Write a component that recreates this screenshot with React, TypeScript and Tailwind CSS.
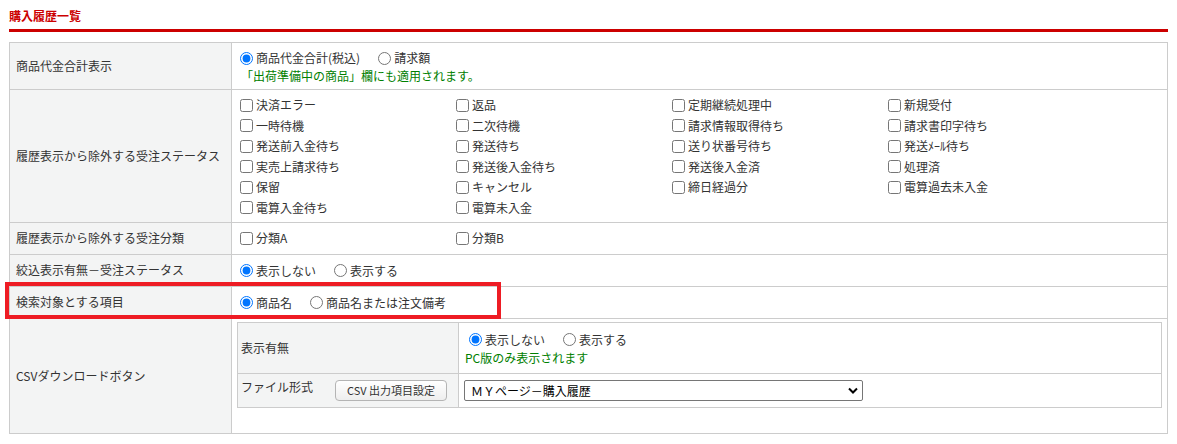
import React from "react";

const FONT = "font-['Noto_Sans_CJK_JP','Noto_Sans',sans-serif]";

const statuses: string[] = [
  "決済エラー", "返品", "定期継続処理中", "新規受付",
  "一時待機", "二次待機", "請求情報取得待ち", "請求書印字待ち",
  "発送前入金待ち", "発送待ち", "送り状番号待ち", "発送ﾒｰﾙ待ち",
  "実売上請求待ち", "発送後入金待ち", "発送後入金済", "処理済",
  "保留", "キャンセル", "締日経過分", "電算過去未入金",
  "電算入金待ち", "電算未入金",
];

const Check: React.FC<{ label: string }> = ({ label }) => (
  <label className="flex items-center h-[20.5px] whitespace-nowrap">
    <input type="checkbox" className="m-0 mr-[3px] size-[13px]" />
    <span>{label}</span>
  </label>
);

const Radio: React.FC<{ name: string; label: string; checked?: boolean }> = ({ name, label, checked }) => (
  <label className="inline-flex items-center h-[20px] mr-[18px] whitespace-nowrap">
    <input type="radio" name={name} defaultChecked={checked} className="m-0 mr-[3px] size-[13px]" />
    <span>{label}</span>
  </label>
);

const Th: React.FC<{ children: React.ReactNode }> = ({ children }) => (
  <td className="w-[222px] border border-[#cccccc] bg-[#f3f4f4] pl-[6px] align-middle">{children}</td>
);

export default function App() {
  return (
    <div className={`relative bg-white px-[9px] pt-[9px] text-[12px] leading-[16px] text-[#333333] ${FONT}`}>
      <h2 className="text-[12px] leading-[14px] font-bold text-[#cc0000] pb-[6px] border-b-[3px] border-[#cc0000]">
        購入履歴一覧
      </h2>

      <table className="mt-[10px] w-full border-collapse">
        <tbody>
          <tr>
            <Th>商品代金合計表示</Th>
            <td className="border border-[#cccccc] pl-[8px] pt-[5px] pb-[5px]">
              <div className="flex">
                <Radio name="total" label="商品代金合計(税込)" checked />
                <Radio name="total" label="請求額" />
              </div>
              <div className="text-[#008000] pl-[1px]">「出荷準備中の商品」欄にも適用されます。</div>
            </td>
          </tr>
          <tr>
            <Th>履歴表示から除外する受注ステータス</Th>
            <td className="border border-[#cccccc] pl-[8px] pt-[5px] pb-[4px]">
              <div className="grid grid-cols-[216px_216px_216px_216px]">
                {statuses.map((s) => (
                  <Check key={s} label={s} />
                ))}
              </div>
            </td>
          </tr>
          <tr>
            <Th>履歴表示から除外する受注分類</Th>
            <td className="border border-[#cccccc] pl-[8px] pt-[5px] pb-[5px]">
              <div className="grid grid-cols-[216px_216px_216px_216px]">
                <Check label="分類A" />
                <Check label="分類B" />
              </div>
            </td>
          </tr>
          <tr>
            <Th>絞込表示有無－受注ステータス</Th>
            <td className="border border-[#cccccc] pl-[8px] pt-[6px] pb-[5px]">
              <div className="flex">
                <Radio name="filter" label="表示しない" checked />
                <Radio name="filter" label="表示する" />
              </div>
            </td>
          </tr>
          <tr>
            <Th>検索対象とする項目</Th>
            <td className="border border-[#cccccc] pl-[8px] pt-[6px] pb-[5px]">
              <div className="flex">
                <Radio name="target" label="商品名" checked />
                <Radio name="target" label="商品名または注文備考" />
              </div>
            </td>
          </tr>
          <tr>
            <Th>CSVダウンロードボタン</Th>
            <td className="border border-[#cccccc] px-[5px] pt-[3px] pb-[25px]">
              <table className="w-full border-collapse">
                <tbody>
                  <tr>
                    <td className="w-[221px] h-[51px] border border-[#cccccc] bg-[#f3f4f4] pl-[3px] align-middle">
                      表示有無
                    </td>
                    <td className="border border-[#cccccc] pl-[6px] py-[6px]">
                      <div className="flex pl-[4px]">
                        <Radio name="csv" label="表示しない" checked />
                        <Radio name="csv" label="表示する" />
                      </div>
                      <div className="text-[#008000]">PC版のみ表示されます</div>
                    </td>
                  </tr>
                  <tr>
                    <td className="w-[221px] h-[34px] border border-[#cccccc] bg-[#f3f4f4] pl-[3px] align-middle">
                      <div className="flex items-center">
                        <span className="-mt-[6px]">ファイル形式</span>
                        <button
                          type="button"
                          className="ml-[22px] h-[21px] w-[112px] rounded-[4px] border border-[#b4b4b4] bg-gradient-to-b from-white to-[#eeeeee] text-[11px] leading-[19px] text-[#333333]"
                        >
                          CSV 出力項目設定
                        </button>
                      </div>
                    </td>
                    <td className="border border-[#cccccc] pl-[5px]">
                      <div className="relative w-[399px]">
                        <select className="block h-[21px] w-full appearance-none rounded-[2px] border border-[#767676] bg-white pl-[6px] text-[12px] leading-[19px] text-black">
                          <option>ＭＹページ－購入履歴</option>
                        </select>
                        <svg
                          className="pointer-events-none absolute right-[5px] top-[7px] h-[7px] w-[10px]"
                          viewBox="0 0 10 7"
                          fill="none"
                          stroke="#000"
                          strokeWidth={2}
                        >
                          <path d="M1 1.5l4 4 4-4" />
                        </svg>
                      </div>
                    </td>
                  </tr>
                </tbody>
              </table>
            </td>
          </tr>
        </tbody>
      </table>

      <div className="pointer-events-none absolute left-[5px] top-[282px] h-[37px] w-[496px] border-[4px] border-[#ee1c24]" />
    </div>
  );
}
